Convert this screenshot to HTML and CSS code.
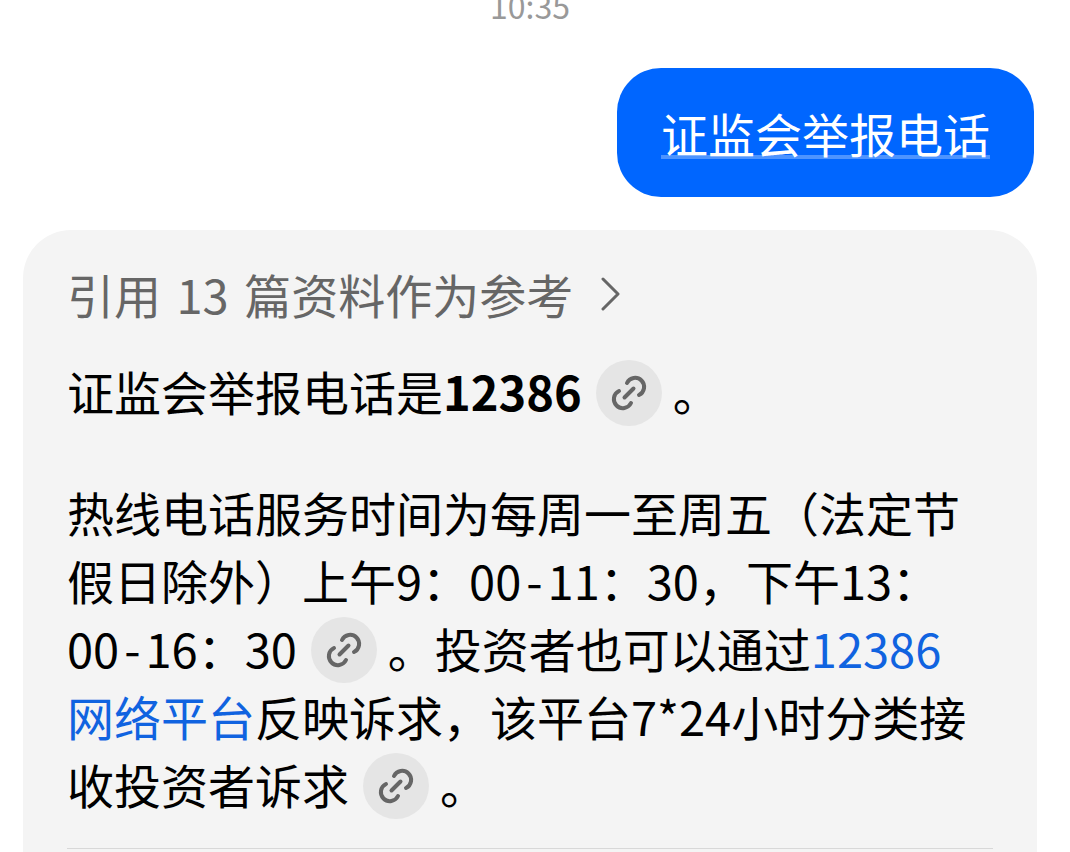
FILE: index.html
```html
<!DOCTYPE html>
<html lang="zh-CN">
<head>
<meta charset="utf-8">
<meta name="viewport" content="width=device-width, initial-scale=1">
<title>证监会举报电话</title>
<link rel="stylesheet" href="styles.css">
</head>
<body>
<svg class="sprite" aria-hidden="true">
  <symbol id="link" viewBox="0 0 66 66">
    <path d="M31 23A9 9 0 1 1 43 35M35 43A9 9 0 1 1 23 31M28.5 37.5L37.5 28.5"/>
  </symbol>
</svg>
<main class="chat">
  <time class="stamp">10:35</time>
  <div class="question"><a class="question-link" href="#">证监会举报电话</a></div>
  <article class="answer">
    <button class="sources" type="button"><span>引用 <span class="spaced">13</span> 篇资料作为参考</span>
      <svg class="chevron" viewBox="0 0 20 34" aria-hidden="true"><path d="M2 2L17 17L2 32"/></svg>
    </button>
    <p class="text">证监会举报电话是<strong>12386</strong><button class="cite" type="button" aria-label="来源"><svg class="cite-icon"><use href="#link"/></svg></button>。</p>
    <p class="text">热线电话服务时间为每周一至周五（法定节假日除外）上午9：00<span class="spaced">-</span>11：30，下午13：<br>00<span class="spaced">-</span>16：30<button class="cite" type="button" aria-label="来源"><svg class="cite-icon"><use href="#link"/></svg></button>。投资者也可以通过<a class="platform" href="#">12386<br>网络平台</a>反映诉求，该平台7*24小时分类接收投资者诉求<button class="cite" type="button" aria-label="来源"><svg class="cite-icon"><use href="#link"/></svg></button>。</p>
    <hr class="divider">
  </article>
</main>
</body>
</html>
```
FILE: styles.css
```css
* {
  box-sizing: border-box;
}

body {
  margin: 0;
  background: #fff;
  color: #000;
  font-family: "Noto Sans CJK SC", sans-serif;
  font-size: 47px;
  line-height: 68px;
}

button {
  border: 0;
  padding: 0;
  font: inherit;
  cursor: pointer;
}

.sprite {
  display: none;
}

.chat {
  display: flex;
  flex-direction: column;
  min-height: 100vh;
  padding: 0 33px 0 23px;
}

.stamp {
  align-self: center;
  margin-bottom: 58px;
  color: #999;
  font-size: 32px;
  line-height: 10px;
}

.question {
  align-self: flex-end;
  margin: 0 3px 33px 0;
  padding: 31px 44px 30px;
  border-radius: 44px;
  background: #0066ff;
}

.question-link {
  color: #fff;
  text-decoration: underline 4px rgba(255, 255, 255, 0.3);
  text-decoration-skip-ink: none;
  text-underline-offset: 2px;
}

.answer {
  flex: 1;
  padding: 30px 44px 0;
  border-radius: 48px 48px 0 0;
  background: #f4f4f4;
}

.sources {
  display: flex;
  align-items: center;
  gap: 28px;
  margin-bottom: 29px;
  background: none;
  color: #666;
}

.spaced {
  margin: 0 5px;
}

.chevron {
  width: 20px;
  height: 34px;
  fill: none;
  stroke: #666;
  stroke-width: 3;
  stroke-linecap: round;
  stroke-linejoin: round;
}

.text {
  margin: 0 0 53px;
}

.text + .divider {
  margin-top: -23px;
}

.cite {
  display: inline-block;
  width: 66px;
  height: 66px;
  margin: -13px 11px -3px 14px;
  border-radius: 50%;
  background: #e5e5e5;
  vertical-align: middle;
}

.cite-icon {
  display: block;
  width: 66px;
  height: 66px;
  fill: none;
  stroke: #666;
  stroke-width: 4;
  stroke-linecap: round;
}

.platform {
  color: #1063e0;
  text-decoration: none;
}

.divider {
  margin: 0;
  border: 0;
  border-top: 1px solid #d8d8d8;
}
```
